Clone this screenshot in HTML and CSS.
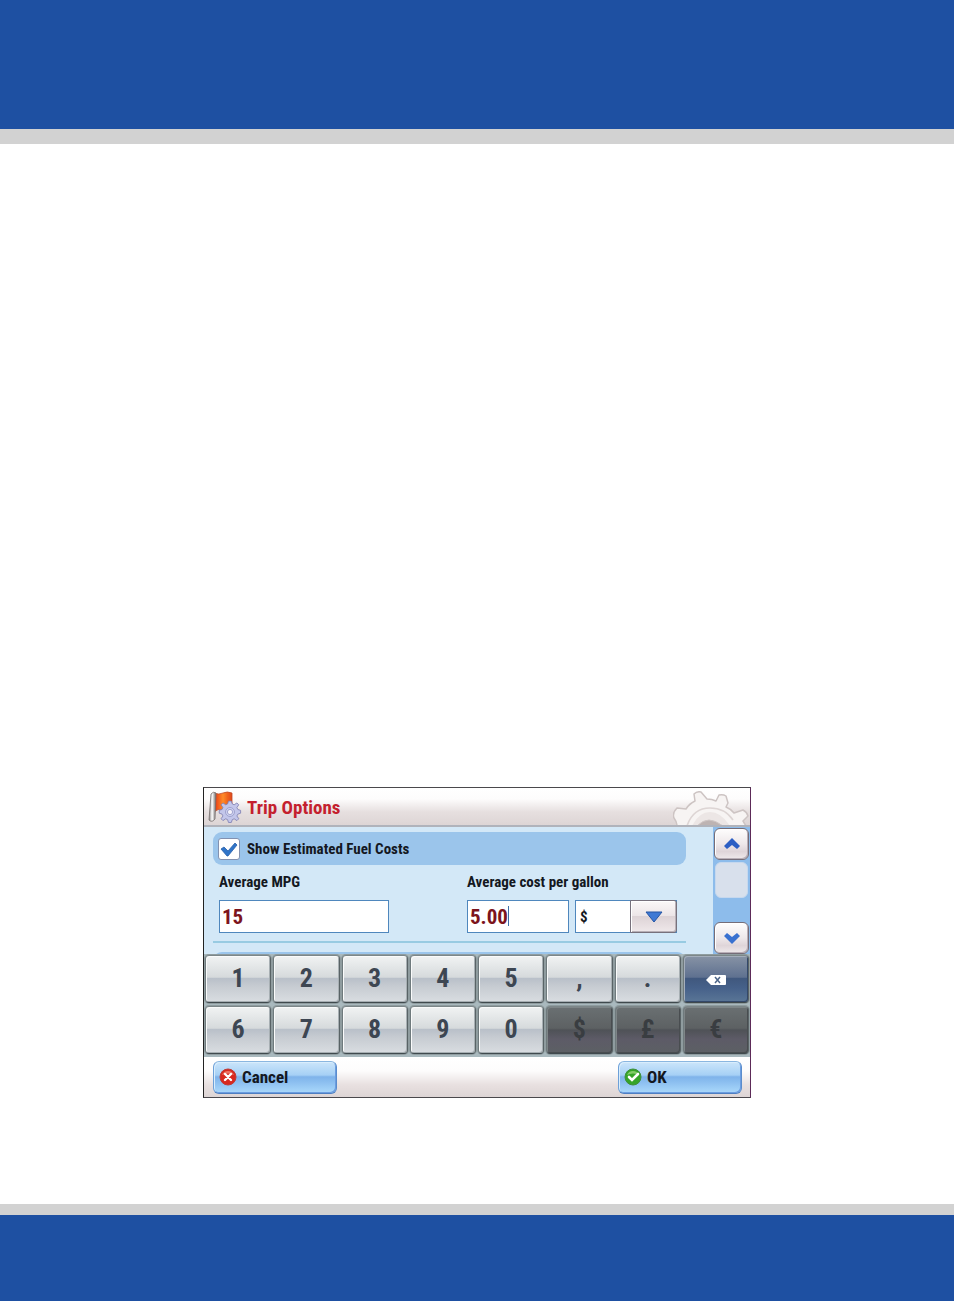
FILE: index.html
```
<!DOCTYPE html>
<html lang="en">
<head>
<meta charset="utf-8">
<title>Trip Options</title>
<link rel="stylesheet" href="styles.css">
</head>
<body>
<header class="page-top"></header>
<main class="page-main">
<form class="device">
  <div class="titlebar">
    <svg class="flag" viewBox="0 0 34 34" aria-hidden="true">
      <defs>
        <linearGradient id="pole"><stop offset="0" stop-color="#858080"/><stop offset=".45" stop-color="#fff"/><stop offset="1" stop-color="#6e6a6a"/></linearGradient>
        <linearGradient id="cloth"><stop offset="0" stop-color="#c8301a"/><stop offset=".2" stop-color="#f0571c"/><stop offset=".5" stop-color="#ff8c28"/><stop offset=".75" stop-color="#f0641c"/><stop offset="1" stop-color="#e0481c"/></linearGradient>
      </defs>
      <path d="M6 3q5 2 9 0t9 0v17q-4 2-9 0t-9 2z" fill="url(#cloth)" stroke="#c04a28" stroke-width=".8"/>
      <path d="M3 4q2-3 5-1l-1 26q-3 4-6 1z" fill="url(#pole)" stroke="#77706f" stroke-width=".8"/>
      <g fill="#c3c6ea" stroke="#7f80b4" stroke-width=".9" stroke-linejoin="round">
        <path d="M21 13h3l1 3 2 1 3-2 2 2-2 3 1 2 3 1v3l-3 1-1 2 2 3-2 2-3-2-2 1-1 3h-3l-1-3-2-1-3 2-2-2 2-3-1-2-3-1v-3l3-1 1-2-2-3 2-2 3 2 2-1z" transform="translate(1 -1) scale(.93)"/>
        <circle cx="22" cy="22" r="4.500" fill="#cfd2f0" stroke="#9a9dcb"/>
        <circle cx="22" cy="22" r="2.600" fill="#f4f2fa" stroke="#9a9dcb"/>
      </g>
    </svg>
    <h1 class="title">Trip Options</h1>
    <svg class="gear" viewBox="0 0 76 34" aria-hidden="true">
      <path d="M4 35Q4 31 1 27Q-1 22 4 17L13 18Q16 13 22 10L21 3Q24 0 28 1L34 8Q39 8 43 10L46 4Q50 3 53 5L55 12L53 16Q58 18 61 22L70 19Q74 21 75 25L70 30L73 35z" fill="#f7f4f3" stroke="#cdc4c3" stroke-width="1.500" stroke-linejoin="round"/>
      <path d="M14 35Q20 17 37 17Q52 17 60 29" fill="none" stroke="#ddd5d4" stroke-width="1.600"/>
      <path d="M19 35Q26 21 37 21T57 35" fill="#ece6e5"/>
      <path d="M24 35Q30 29 36 29T50 35z" fill="#bdb3b2" stroke="#d0c7c6"/>
    </svg>
  </div>

  <div class="body">
    <div class="options">
      <label class="band">
        <input class="tick" type="checkbox" checked>
        <svg class="tick-mark" viewBox="0 0 18 15" aria-hidden="true"><path d="M1 7l3-2 4 4 7-8 2 2-9 11H7z" fill="#2f74c8" stroke="#2a5fa8" stroke-width=".8" stroke-linejoin="round"/></svg>
        <span>Show Estimated Fuel Costs</span>
      </label>
      <div class="fields">
        <div class="field">
          <label class="caption" for="mpg">Average MPG</label>
          <input class="box mpg" id="mpg" type="text" inputmode="decimal" value="15">
        </div>
        <div class="field">
          <label class="caption" for="cost">Average cost per gallon</label>
          <div class="pair">
            <div class="cost-wrap">
              <input class="box cost" id="cost" type="text" inputmode="decimal" value="5.00">
              <span class="caret"></span>
            </div>
            <div class="currency">
              <select class="box unit" aria-label="Currency"><option>$</option><option>£</option><option>€</option></select>
              <span class="drop"><svg viewBox="0 0 18 12" width="18" height="12" aria-hidden="true"><path d="M1 1h16l-8 10z" fill="#3f79d4" stroke="#2554a4"/></svg></span>
            </div>
          </div>
        </div>
      </div>
      <div class="band next"></div>
    </div>
    <div class="scroll">
      <button class="step" type="button" aria-label="Scroll up"><svg viewBox="0 0 16 12" width="16" height="12" aria-hidden="true"><path d="M8 0l8 8-3 3-5-4-5 4-3-3z" fill="#2c5fc4"/></svg></button>
      <div class="thumb"></div>
      <button class="step" type="button" aria-label="Scroll down"><svg viewBox="0 0 16 12" width="16" height="12" aria-hidden="true"><path d="M8 12L0 4l3-3 5 4 5-4 3 3z" fill="#3971d0"/></svg></button>
    </div>
  </div>

  <div class="keys">
    <button class="key" type="button">1</button>
    <button class="key" type="button">2</button>
    <button class="key" type="button">3</button>
    <button class="key" type="button">4</button>
    <button class="key" type="button">5</button>
    <button class="key" type="button">,</button>
    <button class="key" type="button">.</button>
    <button class="key erase" type="button" aria-label="Backspace"><svg viewBox="0 0 22 12" width="22" height="12" aria-hidden="true"><path d="M1 6l5-5h14q1 0 1 1v8q0 1-1 1H6z" fill="#fff"/><path d="M10 3l5 6M15 3l-5 6" stroke="#4c6488" stroke-width="1.5"/></svg></button>
    <button class="key" type="button">6</button>
    <button class="key" type="button">7</button>
    <button class="key" type="button">8</button>
    <button class="key" type="button">9</button>
    <button class="key" type="button">0</button>
    <button class="key" type="button" disabled>$</button>
    <button class="key" type="button" disabled>£</button>
    <button class="key" type="button" disabled>€</button>
  </div>

  <div class="actions">
    <button class="action" type="button">
      <svg viewBox="0 0 18 18" width="18" height="18" aria-hidden="true"><circle cx="9" cy="9" r="8" fill="#d8281e" stroke="#c03a34"/><path d="M3 7a6.500 6.500 0 0 1 12 0q-6-3-12 0z" fill="#ec7464"/><path d="M6 6l6 6M12 6l-6 6" stroke="#fff" stroke-width="2.400" stroke-linecap="round"/></svg>
      <span>Cancel</span>
    </button>
    <button class="action" type="button">
      <svg viewBox="0 0 18 18" width="18" height="18" aria-hidden="true"><circle cx="9" cy="9" r="8" fill="#35a428" stroke="#3f8f3c"/><path d="M3 7a6.500 6.500 0 0 1 12 0q-6-3-12 0z" fill="#82cc68"/><path d="M5 9l3 3 6-6" fill="none" stroke="#fff" stroke-width="2.600" stroke-linecap="round"/></svg>
      <span>OK</span>
    </button>
  </div>
</form>
</main>
<footer class="page-bottom"></footer>
</body>
</html>
```
FILE: styles.css
```
* { box-sizing: border-box; }
body {
  margin: 0;
  min-height: 100vh;
  display: flex;
  flex-direction: column;
  background: #fff;
  color: #14181f;
  font-family: "Roboto Condensed", "Liberation Sans Narrow", "DejaVu Sans Condensed", sans-serif;
  font-weight: bold;
}
button, input, select { font: inherit; color: inherit; margin: 0; }
button { padding: 0; }
.page-top { height: 144px; background: #1e50a2; border-bottom: 15px solid #d2d2d2; }
.page-bottom { height: 97px; background: #1e50a2; border-top: 11px solid #d2d2d2; }
.page-main {
  flex: 1;
  display: flex;
  flex-direction: column;
  justify-content: flex-end;
  align-items: center;
  padding-bottom: 106px;
}
.device {
  width: 100%;
  max-width: 548px;
  border: 1px solid #4a484c;
  border-left-color: #222;
  border-right-color: #5c2a58;
}
.titlebar {
  height: 39px;
  display: flex;
  align-items: center;
  padding: 0 1px 0 4px;
  background: linear-gradient(#fff 0%, #fdfcfc 30%, #e6dfdf 65%, #ddd5d5 100%);
  border-bottom: 2px solid #b0b3bb;
}
.flag { width: 34px; height: 34px; }
.title { flex: 1; margin: 2px 0 0 5px; font-size: 19px; line-height: 24px; color: #c41f2e; }
.gear { width: 76px; height: 34px; align-self: flex-end; }

.body { height: 127px; display: flex; overflow: hidden; background: #d3e8f7; }
.options { flex: 1; padding: 5px 27px 0 9px; }
.band {
  height: 33px;
  display: flex;
  align-items: center;
  padding-left: 5px;
  position: relative;
  border-radius: 9px;
  background: #9bc5eb;
  font-size: 15px;
}
.band span { margin-left: 7px; }
.tick {
  appearance: none;
  width: 22px;
  height: 22px;
  border: 1px solid #8291b0;
  border-radius: 3px;
  background: #fff;
}
.tick-mark { display: none; position: absolute; left: 7px; top: 10px; width: 18px; height: 15px; pointer-events: none; }
.tick:checked + .tick-mark { display: block; }
.fields {
  display: flex;
  justify-content: space-between;
  padding: 8px 9px 8px 6px;
  border-bottom: 2px solid #98cbe2;
}
.field { display: flex; flex-direction: column; gap: 9px; }
.caption { font-size: 15px; line-height: 18px; }
.pair { display: flex; gap: 6px; }
.box {
  height: 33px;
  border: 1px solid #4f87bd;
  border-radius: 0;
  background: #fff;
  padding: 0 2px;
  color: #7c141c;
  font-size: 21px;
}
.mpg { width: 170px; }
.cost-wrap { position: relative; width: 102px; }
.cost { width: 100%; }
.caret { position: absolute; left: 41px; top: 6px; width: 1px; height: 20px; background: #3c6fa8; }
.currency { position: relative; width: 102px; }
.unit { width: 100%; appearance: none; color: #14181f; font-size: 15px; padding-left: 4px; }
.drop {
  position: absolute;
  top: 0;
  right: 0;
  width: 47px;
  height: 33px;
  display: grid;
  place-items: center;
  border: 1px solid #77717c;
  border-radius: 0 3px 3px 0;
  background: linear-gradient(#fbf8f8, #ece5e7 48%, #ddd3d6 50%, #efe8ea);
  box-shadow: inset 1px 1px #fff, inset -1px -1px #b8b0b6;
  pointer-events: none;
}
.next { margin-top: 9px; }
.scroll {
  width: 37px;
  display: flex;
  flex-direction: column;
  padding: 1px 1px 0;
  background: #8dbceb;
}
.step {
  height: 32px;
  display: grid;
  place-items: center;
  border: 1px solid #756d78;
  border-radius: 6px;
  background: linear-gradient(#fefdfd, #eee8ea 50%, #dfd5d9 75%, #efe9eb);
  box-shadow: inset 1px 1px #fff, inset -1px -1px #b9afb7;
}
.thumb { height: 36px; margin: 2px 1px auto; border-radius: 6px; background: #d8e0ec; border: 1px solid #c6d8ee; }

.keys {
  display: grid;
  grid-template-columns: repeat(8, 1fr);
  gap: 3px 2px;
  padding: 1px 1px 3px;
  background: #a9b9be;
}
.key {
  height: 48px;
  padding-bottom: 3px;
  border: 1px solid #5a6467;
  border-color: #7c8789 #596366 #3f494d #6f7a7d;
  border-radius: 4px;
  background: linear-gradient(#f1f3f3 0%, #d6dadc 46%, #b9c0c9 49%, #c6cbd1 65%, #d9dde1 100%);
  box-shadow: inset 1px 1px #fafbfb, inset -1px -1px #a7afb3, 0 0 0 1px #8f9c9f;
  color: #3d4652;
  font-size: 26px;
  line-height: 30px;
}
.key:disabled {
  color: #393d41;
  background: linear-gradient(#6a7072, #5d6163 46%, #4f5257 50%, #5d5b67 70%, #5c6064);
  box-shadow: inset 1px 1px #7e8587, inset -1px -1px #494d50, 0 0 0 1px #8f9c9f;
}
.erase {
  background: linear-gradient(#8793a5, #5f7190 46%, #40587e 49%, #46618a 70%, #5a7696);
  box-shadow: inset 1px 1px #a4aebb, inset -1px -1px #34496a, 0 0 0 1px #8f9c9f;
}
.erase svg { display: block; margin: 5px auto 0; }

.actions {
  display: flex;
  justify-content: space-between;
  padding: 4px 8px 3px 9px;
  background: linear-gradient(#fff 0%, #fdfcfc 35%, #e8e0e0 70%, #ddd5d5 100%);
}
.action {
  width: 124px;
  height: 33px;
  display: flex;
  align-items: center;
  padding: 0 0 2px 5px;
  border: 1px solid #6da0d8;
  border-color: #8ab6e0 #5a8ccc #4d7fc2 #6da0d8;
  border-radius: 6px;
  background: linear-gradient(#cbe5fa 0%, #a6d0f5 42%, #7fb3ea 48%, #8cbff0 65%, #abd9fb 100%);
  box-shadow: inset 1px 1px #d9edfc, inset -1px -1px #6c9de0;
  font-size: 17px;
}
.action span { margin-left: 5px; }
```
